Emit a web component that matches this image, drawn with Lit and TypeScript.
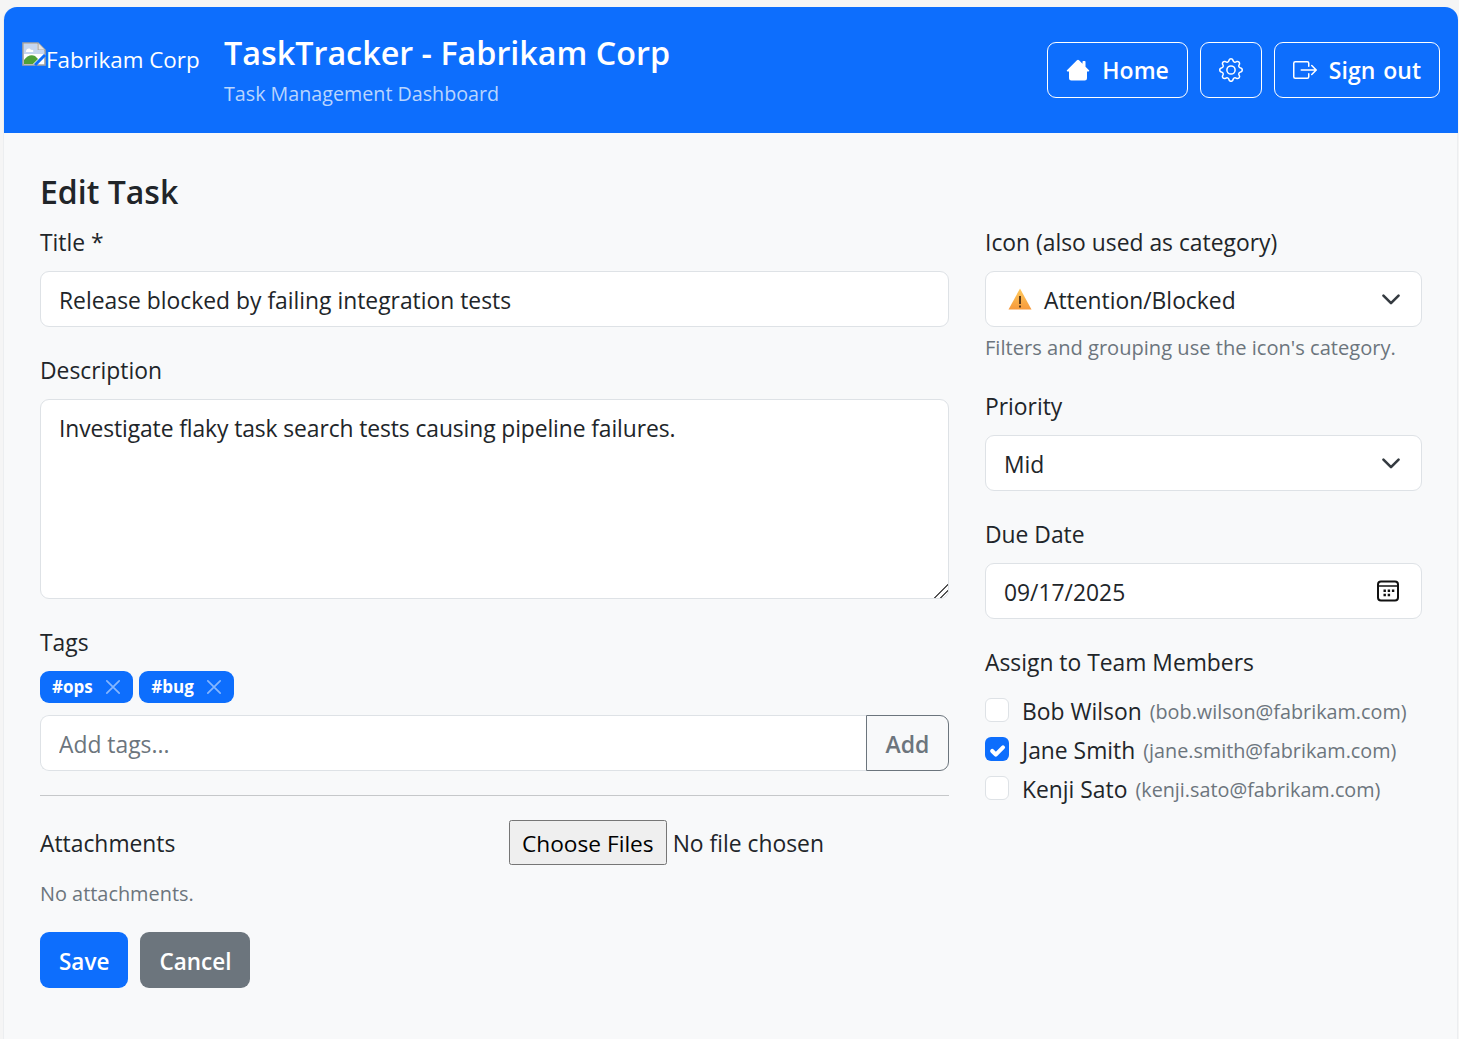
import { LitElement, html, css } from "lit";
import { customElement } from "lit/decorators.js";

const chevron = html`<svg class="chev" viewBox="0 0 16 16" width="22" height="22"><path fill="none" stroke="#343a40" stroke-linecap="round" stroke-linejoin="round" stroke-width="1.900" d="m2.500 5.500 5.500 5.500 5.500-5.500"/></svg>`;
const house = html`<svg viewBox="0 0 16 16" width="24" height="24" fill="#fff"><path d="M8.707 1.500a1 1 0 0 0-1.414 0L.646 8.146a.5.5 0 0 0 .354.854H2v4.500A1.500 1.500 0 0 0 3.500 15h9a1.500 1.500 0 0 0 1.500-1.500V9h1a.5.5 0 0 0 .354-.854L13 5.793V2.500a.5.5 0 0 0-.5-.5h-1a.5.5 0 0 0-.5.5v1.293z"/></svg>`;
const gear = html`<svg viewBox="0 0 16 16" width="24" height="24" fill="#fff"><path d="M8 4.754a3.246 3.246 0 1 0 0 6.492 3.246 3.246 0 0 0 0-6.492M5.754 8a2.246 2.246 0 1 1 4.492 0 2.246 2.246 0 0 1-4.492 0"/><path d="M9.796 1.343c-.527-1.79-3.065-1.79-3.592 0l-.094.319a.873.873 0 0 1-1.255.52l-.292-.16c-1.64-.892-3.433.902-2.54 2.541l.159.292a.873.873 0 0 1-.52 1.255l-.319.094c-1.79.527-1.79 3.065 0 3.592l.319.094a.873.873 0 0 1 .52 1.255l-.16.292c-.892 1.64.901 3.434 2.541 2.54l.292-.159a.873.873 0 0 1 1.255.52l.094.319c.527 1.79 3.065 1.79 3.592 0l.094-.319a.873.873 0 0 1 1.255-.52l.292.16c1.64.893 3.434-.902 2.54-2.541l-.159-.292a.873.873 0 0 1 .52-1.255l.319-.094c1.79-.527 1.79-3.065 0-3.592l-.319-.094a.873.873 0 0 1-.52-1.255l.16-.292c.893-1.64-.902-3.433-2.541-2.54l-.292.159a.873.873 0 0 1-1.255-.52zm-2.633.283c.246-.835 1.428-.835 1.674 0l.094.319a1.873 1.873 0 0 0 2.693 1.115l.291-.16c.764-.415 1.6.42 1.184 1.185l-.159.292a1.873 1.873 0 0 0 1.116 2.692l.318.094c.835.246.835 1.428 0 1.674l-.319.094a1.873 1.873 0 0 0-1.115 2.693l.16.291c.415.764-.42 1.6-1.185 1.184l-.291-.159a1.873 1.873 0 0 0-2.693 1.116l-.094.318c-.246.835-1.428.835-1.674 0l-.094-.319a1.873 1.873 0 0 0-2.692-1.115l-.292.16c-.764.415-1.6-.42-1.184-1.185l.159-.291A1.873 1.873 0 0 0 1.945 8.930l-.319-.094c-.835-.246-.835-1.428 0-1.674l.319-.094A1.873 1.873 0 0 0 3.060 4.377l-.16-.292c-.415-.764.42-1.600 1.185-1.184l.292.159a1.873 1.873 0 0 0 2.692-1.115z"/></svg>`;
const signout = html`<svg viewBox="0 0 16 16" width="24" height="24" fill="#fff"><path fill-rule="evenodd" d="M10 12.500a.5.5 0 0 1-.5.5h-8a.5.5 0 0 1-.5-.5v-9a.5.5 0 0 1 .5-.5h8a.5.5 0 0 1 .5.5v2a.5.5 0 0 0 1 0v-2A1.500 1.500 0 0 0 9.500 2h-8A1.500 1.500 0 0 0 0 3.500v9A1.500 1.500 0 0 0 1.500 14h8a1.500 1.500 0 0 0 1.500-1.500v-2a.5.5 0 0 0-1 0z"/><path fill-rule="evenodd" d="M15.854 8.354a.5.5 0 0 0 0-.708l-3-3a.5.5 0 0 0-.708.708L14.293 7.500H5.500a.5.5 0 0 0 0 1h8.793l-2.147 2.146a.5.5 0 0 0 .708.708z"/></svg>`;
const broken = html`<svg class="broken" viewBox="0 0 24 24" width="24" height="24"><path d="M1 1h15l7 7v15H1z" fill="#fff" stroke="#a3a3a3" stroke-width="1.600"/><path d="M16 1v7h7" fill="#e4e4e4" stroke="#a3a3a3" stroke-width="1.200"/><path d="M2 2h13v6h7v4H2z" fill="#c5d6f0"/><path d="M4 9c1-3 4-3 5-1 2-1 3 1 2 2H4z" fill="#fff"/><path d="M2 22v-4c3-4 7-6 11-4l3 3-5 5z" fill="#4fa03a"/><path d="m13 23 10-10" stroke="#0d6efd" stroke-width="3"/></svg>`;
const warn = html`<svg class="ico" viewBox="0 0 24 24" width="24" height="24"><defs><linearGradient id="w" x1="0" y1="0" x2="0" y2="1"><stop offset="0" stop-color="#ffc95c"/><stop offset="1" stop-color="#f79a3c"/></linearGradient></defs><path d="M12 1.500 23.500 22.500H.5z" fill="url(#w)"/><path d="M11 9h2v8h-2zM11 18.500h2v2h-2z" fill="#5a3a1a"/></svg>`;
const cal = html`<svg class="ico" viewBox="0 0 24 24" width="24" height="24"><rect x="2" y="2.500" width="20" height="19" rx="3" fill="none" stroke="#111" stroke-width="2"/><path d="M2 7h20" stroke="#111" stroke-width="1.500"/><path fill="#111" d="M7.500 10.500h2.400v2.400H7.500zM11.700 10.500h2.400v2.400h-2.400zM15.900 10.500h2.400v2.400h-2.400zM7.500 14.800h2.400v2.400H7.500zM11.700 14.800h2.400v2.400h-2.400z"/></svg>`;
const x = html`<svg class="x" viewBox="0 0 16 16" width="18" height="18"><path d="M2.500 2.500l11 11M13.500 2.500l-11 11" stroke="#fff" stroke-width="1.500" stroke-linecap="round"/></svg>`;
const check = html`<svg viewBox="0 0 20 20" width="24" height="24"><path fill="none" stroke="#fff" stroke-linecap="round" stroke-linejoin="round" stroke-width="3.400" d="m6 10 3 3 6-6"/></svg>`;

@customElement("app-root")
export class AppRoot extends LitElement {
  static styles = css`
    :host {
      display: block;
      height: 1039px;
      overflow: hidden;
      box-sizing: border-box;
      padding: 7px 1px 0 3px;
      background: #f5f5f5;
      font-family: "Open Sans", "Noto Sans", sans-serif;
      font-size: 22.850px;
      line-height: 36px;
      color: #212529;
    }
    * { box-sizing: border-box; }
    .card {
      background: #f8f9fa;
      border: 1px solid #eceef0;
      border-width: 0 1px;
      border-radius: 13px 13px 0 0;
      height: 1032px;
    }
    header {
      height: 126px;
      margin: 0 -1px 0 0;
      background: #0d6efd;
      border-radius: 13px 13px 0 0;
      color: #fff;
      display: flex;
      align-items: flex-start;
      padding: 35px 18px 0 18px;
    }
    .logo { display: flex; width: 202px; flex: none; align-items: flex-start; }
    .alt { font-size: 22.400px; line-height: 36px; }
    .title { flex: 1; margin-top: -11px; }
    .title h1 { margin: 0; font-size: 32.300px; font-weight: 600; line-height: 43px; }
    .title p { margin: 4px 0 0; font-size: 19.700px; line-height: 32px; color: rgba(255,255,255,.72); }
    .hbtns { display: flex; gap: 12px; }
    .hbtn {
      height: 56px; border: 1px solid #fff; border-radius: 9px; color: #fff;
      display: flex; align-items: center; gap: 12px; padding: 0 18px;
      font-size: 23px; font-weight: 600; word-spacing: 2px;
    }
    main { display: flex; gap: 36px; padding: 0 36px; }
    .left { width: 909px; flex: none; }
    .right { width: 437px; flex: none; padding-top: 92px; }
    h2 { margin: 35px 0 9px; font-size: 32px; font-weight: 600; line-height: 48px; }
    label, .lbl { display: block; height: 36px; line-height: 35px; margin-bottom: 10px; }
    .ctl {
      display: flex; align-items: center; width: 100%; height: 56px;
      background: #fff; border: 1px solid #dee2e6; border-radius: 9px;
      padding: 2px 18px 0; font: inherit; color: #212529; outline: none;
    }
    textarea.ctl { display: block; height: 200px; padding: 11px 18px; resize: vertical; letter-spacing: -0.1px; }
    textarea.ctl::-webkit-resizer {
      background: linear-gradient(135deg, transparent 50%, #555 50%, #555 57%, transparent 57%, transparent 72%, #555 72%, #555 79%, transparent 79%);
    }
    .gap { margin-bottom: 26px; }
    .chips { display: flex; gap: 6px; margin-bottom: 12px; }
    .chip {
      height: 32px; background: #0d6efd; color: #fff; border-radius: 9px;
      font-size: 17px; font-weight: 700; line-height: 32px; padding: 0 11.500px 0 12px;
      display: flex; align-items: center; gap: 11px;
    }
    .x { opacity: .5; }
    .igroup { display: flex; }
    .igroup .ctl { flex: 1; border-radius: 9px 0 0 9px; border-right: 0; }
    .igroup .ctl::placeholder { color: #6c757d; opacity: 1; }
    .add {
      width: 83px; height: 56px; border: 1px solid #6c757d; border-radius: 0 9px 9px 0;
      color: #6c757d; display: flex; align-items: center; justify-content: center;
      font-size: 23px; font-weight: 600; padding-top: 1px;
    }
    hr { border: 0; border-top: 1px solid #c6c8ca; margin: 24px 0 24px; }
    .attach { display: flex; height: 45px; align-items: flex-start; }
    .attach .lbl { width: 469px; margin: 6px 0 0; flex: none; }
    .file { font: inherit; color: #212529; height: 45px; width: 400px; }
    .file::file-selector-button { font: inherit; font-size: 22.700px; height: 45px; padding: 2px 11px 0; margin-right: 6px; }
    .muted { color: #6c757d; font-size: 19.900px; }
    .none { margin: 11px 0 20px; height: 36px; }
    .btns { display: flex; gap: 12px; }
    .btn {
      height: 56px; border-radius: 9px; color: #fff; display: flex; align-items: center;
      padding: 4px 19px 0; font-size: 22.500px; font-weight: 600;
    }
    .primary { background: #0d6efd; }
    .secondary { background: #6c757d; }
    .sel { justify-content: space-between; padding-top: 4px; }
    .sel .l { display: flex; align-items: center; gap: 12px; padding-left: 4px; }
    .chev { margin: -4px 1px 0 0; }
    .ico { margin-top: -4px; }
    .help { height: 36px; margin: 3px 0 23px; line-height: 36px; font-size: 20.100px; }
    .spc { margin-bottom: 26px; }
    .cals { margin-right: 3px; display: flex; }
    .assign { margin-top: 26px; }
    .row { display: flex; align-items: center; height: 39px; padding-top: 2px; }
    .cb {
      width: 24px; height: 24px; border: 1px solid #dee2e6; border-radius: 6px;
      background: #fff; flex: none; margin: -4px 13px 0 0;
    }
    .cb.on { background: #0d6efd; border: 0; }
    .row .em { color: #6c757d; font-size: 19.800px; margin-left: 8px; }
  `;

  render() {
    const members: [string, string, boolean][] = [
      ["Bob Wilson", "(bob.wilson@fabrikam.com)", false],
      ["Jane Smith", "(jane.smith@fabrikam.com)", true],
      ["Kenji Sato", "(kenji.sato@fabrikam.com)", false],
    ];
    return html`
      <div class="card">
        <header>
          <div class="logo">${broken}<span class="alt">Fabrikam Corp</span></div>
          <div class="title">
            <h1>TaskTracker - Fabrikam Corp</h1>
            <p>Task Management Dashboard</p>
          </div>
          <div class="hbtns">
            <div class="hbtn">${house}<span>Home</span></div>
            <div class="hbtn">${gear}</div>
            <div class="hbtn">${signout}<span>Sign out</span></div>
          </div>
        </header>
        <main>
          <div class="left">
            <h2>Edit Task</h2>
            <label>Title *</label>
            <input class="ctl gap" .value=${"Release blocked by failing integration tests"} />
            <label>Description</label>
            <textarea class="ctl gap" .value=${"Investigate flaky task search tests causing pipeline failures."}></textarea>
            <label>Tags</label>
            <div class="chips">
              <div class="chip">#ops${x}</div>
              <div class="chip">#bug${x}</div>
            </div>
            <div class="igroup">
              <input class="ctl" placeholder="Add tags..." />
              <div class="add">Add</div>
            </div>
            <hr />
            <div class="attach">
              <div class="lbl">Attachments</div>
              <input class="file" type="file" multiple />
            </div>
            <div class="muted none">No attachments.</div>
            <div class="btns">
              <div class="btn primary">Save</div>
              <div class="btn secondary">Cancel</div>
            </div>
          </div>
          <div class="right">
            <label>Icon (also used as category)</label>
            <div class="ctl sel"><span class="l">${warn}Attention/Blocked</span>${chevron}</div>
            <div class="muted help">Filters and grouping use the icon's category.</div>
            <label>Priority</label>
            <div class="ctl sel spc"><span>Mid</span>${chevron}</div>
            <label>Due Date</label>
            <div class="ctl sel"><span>09/17/2025</span><span class="cals">${cal}</span></div>
            <div class="assign">
              <label>Assign to Team Members</label>
              ${members.map(
                ([n, e, c]) => html`<div class="row">
                  <span class="cb ${c ? "on" : ""}">${c ? check : ""}</span><span>${n}</span><span class="em">${e}</span>
                </div>`
              )}
            </div>
          </div>
        </main>
      </div>
    `;
  }
}
